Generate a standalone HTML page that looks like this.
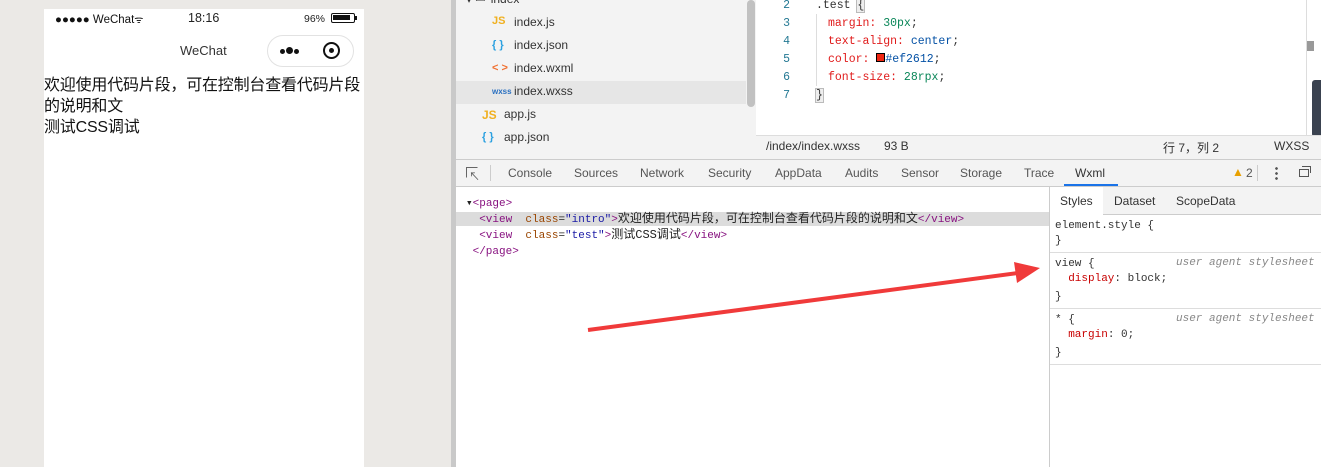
<!DOCTYPE html>
<html><head><meta charset="utf-8"><style>
*{margin:0;padding:0;box-sizing:border-box}
body{width:1321px;height:467px;overflow:hidden;position:relative;background:#ebe9e6;font-family:"Liberation Sans","Noto Sans CJK SC",sans-serif;font-size:12px;color:#333}
.a{position:absolute}
.mono{font-family:"Liberation Mono","Noto Sans CJK SC",monospace}
.tree div{position:absolute;height:23px;line-height:23px;font-size:12px;color:#333}
.ic{position:absolute;font-size:11px;font-weight:bold}
.code div{position:absolute;height:18px;line-height:18px;font-size:11.5px}
.ln{left:0;width:34px;text-align:right;color:#237893}
.tab{position:absolute;top:160px;height:27px;line-height:27px;font-size:12px;color:#555}
.k{color:#e01b1b}
.tg{color:#881280}.at{color:#994500}.av{color:#1a1aa6}
</style></head><body>
<!-- phone -->
<div class="a" style="left:44px;top:9px;width:320px;height:458px;background:#fff"></div>
<div class="a" style="left:55px;top:12px;font-size:11.5px;color:#111">●●●●● WeChat<span style="font-size:10px">ᯤ</span></div>
<div class="a" style="left:188px;top:11px;font-size:12.5px;color:#222">18:16</div>
<div class="a" style="left:304px;top:13px;font-size:10.5px;color:#222">96%</div>
<div class="a" style="left:331px;top:13px;width:24px;height:10px;border:1.5px solid #111;border-radius:2px;padding:1px"><div style="width:17px;height:5px;background:#111"></div></div>
<div class="a" style="left:355px;top:16px;width:2px;height:4px;background:#111"></div>
<div class="a" style="left:180px;top:43px;font-size:13px;color:#333">WeChat</div>
<div class="a" style="left:267px;top:35px;width:87px;height:32px;border:1px solid #e2e2e2;border-radius:16px;background:#fff"></div>
<div class="a" style="left:280px;top:49px;width:5px;height:5px;border-radius:50%;background:#111"></div>
<div class="a" style="left:286px;top:47px;width:7px;height:7px;border-radius:50%;background:#111"></div>
<div class="a" style="left:294px;top:49px;width:5px;height:5px;border-radius:50%;background:#111"></div>
<div class="a" style="left:323px;top:42px;width:17px;height:17px;border-radius:50%;border:2px solid #111"></div>
<div class="a" style="left:329px;top:48px;width:5px;height:5px;border-radius:50%;background:#111"></div>
<div class="a" style="left:44px;top:75px;width:322px;font-size:16px;line-height:21px;color:#111;letter-spacing:-0.2px">欢迎使用代码片段，可在控制台查看代码片段<br>的说明和文<br>测试CSS调试</div>
<!-- divider -->
<div class="a" style="left:451px;top:0;width:5px;height:467px;background:#c9c9c9"></div>
<!-- tree -->
<div class="a" style="left:456px;top:0;width:290px;height:160px;background:#f3f3f3"></div>
<div class="a" style="left:456px;top:81px;width:290px;height:23px;background:#e6e6e6"></div>
<div class="a" style="left:746px;top:0;width:10px;height:160px;background:#f3f3f3"></div>
<div class="a" style="left:747px;top:0;width:8px;height:107px;background:#c1c1c1;border-radius:4px"></div>
<div class="tree">
<div style="left:466px;top:-12px">▾ ▱ index</div>
<span class="ic" style="left:492px;top:15px;color:#f0b020">JS</span><div style="left:514px;top:11px">index.js</div>
<span class="ic" style="left:492px;top:39px;color:#2aa0e0">{ }</span><div style="left:514px;top:34px">index.json</div>
<span class="ic" style="left:492px;top:62px;color:#f07030">&lt; &gt;</span><div style="left:514px;top:57px">index.wxml</div>
<span class="ic" style="left:492px;top:87px;color:#2a70c0;font-size:8px">wxss</span><div style="left:514px;top:80px">index.wxss</div>
<span class="ic" style="left:482px;top:108px;color:#f0b020;font-size:12px">JS</span><div style="left:504px;top:103px">app.js</div>
<span class="ic" style="left:482px;top:131px;color:#2aa0e0">{ }</span><div style="left:504px;top:126px">app.json</div>
</div>
<!-- editor -->
<div class="a" style="left:756px;top:0;width:565px;height:135px;background:#fff"></div>
<div class="code mono">
<div class="ln" style="left:756px;top:-3px">2</div><div style="left:816px;top:-3px;color:#333">.test <span style="background:#eee;outline:1px solid #bbb">{</span></div>
<div class="ln" style="left:756px;top:15px">3</div><div style="left:828px;top:15px"><span class="k">margin:</span> <span style="color:#098658">30px</span>;</div>
<div class="ln" style="left:756px;top:33px">4</div><div style="left:828px;top:33px"><span class="k">text-align:</span> <span style="color:#0451a5">center</span>;</div>
<div class="ln" style="left:756px;top:51px">5</div><div style="left:828px;top:51px"><span class="k">color:</span> <span style="display:inline-block;width:9px;height:9px;background:#ef2612;border:1px solid #000"></span><span style="color:#0451a5">#ef2612</span>;</div>
<div class="ln" style="left:756px;top:69px">6</div><div style="left:828px;top:69px"><span class="k">font-size:</span> <span style="color:#098658">28rpx</span>;</div>
<div class="ln" style="left:756px;top:87px">7</div><div style="left:816px;top:87px;color:#333"><span style="background:#eee;outline:1px solid #bbb">}</span></div>
</div>
<div class="a" style="left:816px;top:14px;width:1px;height:72px;background:#ddd"></div>
<div class="a" style="left:1306px;top:0;width:1px;height:135px;background:#ddd"></div>
<div class="a" style="left:1307px;top:41px;width:7px;height:10px;background:#999"></div>
<div class="a" style="left:1312px;top:80px;width:9px;height:57px;background:#3a4250;border-radius:3px 0 0 3px"></div>
<!-- status -->
<div class="a" style="left:756px;top:135px;width:565px;height:25px;background:#f3f3f3;border-top:1px solid #ddd"></div>
<div class="a" style="left:766px;top:139px;font-size:12px">/index/index.wxss</div>
<div class="a" style="left:884px;top:139px;font-size:12px">93 B</div>
<div class="a" style="left:1163px;top:139px;font-size:12px">行 7，列 2</div>
<div class="a" style="left:1274px;top:139px;font-size:12px">WXSS</div>
<!-- toolbar -->
<div class="a" style="left:456px;top:159px;width:865px;height:28px;background:#f3f3f3;border-top:1px solid #ccc;border-bottom:1px solid #ccc"></div>
<div class="a" style="left:466px;top:167px;width:12px;height:11px;border:1.5px solid #666;border-right-color:transparent;border-bottom-color:transparent"></div>
<div class="a" style="left:469px;top:168px;font-size:11px;color:#555">↖</div>
<div class="a" style="left:490px;top:165px;width:1px;height:16px;background:#ccc"></div>
<div class="tab" style="left:508px">Console</div>
<div class="tab" style="left:574px">Sources</div>
<div class="tab" style="left:640px">Network</div>
<div class="tab" style="left:708px">Security</div>
<div class="tab" style="left:775px">AppData</div>
<div class="tab" style="left:845px">Audits</div>
<div class="tab" style="left:901px">Sensor</div>
<div class="tab" style="left:960px">Storage</div>
<div class="tab" style="left:1024px">Trace</div>
<div class="tab" style="left:1075px;color:#333">Wxml</div>
<div class="a" style="left:1064px;top:184px;width:54px;height:2px;background:#1a73e8"></div>
<div class="a" style="left:1232px;top:165px;color:#e8a000;font-size:12px">▲</div><div class="a" style="left:1246px;top:166px;font-size:12px;color:#555">2</div>
<div class="a" style="left:1257px;top:165px;width:1px;height:16px;background:#ccc"></div>
<div class="a" style="left:1275px;top:166px;width:3px;height:14px;background:radial-gradient(circle,#555 1.2px,transparent 1.5px) 0 0/3px 5px"></div>
<div class="a" style="left:1299px;top:169px;width:10px;height:8px;border:1.5px solid #555"></div>
<div class="a" style="left:1302px;top:166px;width:9px;height:7px;border-top:1.5px solid #555;border-right:1.5px solid #555"></div>
<!-- bottom -->
<div class="a" style="left:456px;top:187px;width:865px;height:280px;background:#fff"></div>
<div class="a" style="left:456px;top:212px;width:593px;height:14px;background:#dcdcdc"></div>
<div class="a mono" style="left:466px;top:197px;font-size:11px;line-height:15.2px;color:#222;white-space:pre">▾<span class="tg">&lt;page&gt;</span>
  <span class="tg">&lt;view</span>  <span class="at">class</span>=<span class="av">"intro"</span><span class="tg">&gt;</span><span style="font-size:12px">欢迎使用代码片段，可在控制台查看代码片段的说明和文</span><span class="tg">&lt;/view&gt;</span>
  <span class="tg">&lt;view</span>  <span class="at">class</span>=<span class="av">"test"</span><span class="tg">&gt;</span><span style="font-size:12px">测试CSS调试</span><span class="tg">&lt;/view&gt;</span>
 <span class="tg">&lt;/page&gt;</span></div>
<div class="a" style="left:1049px;top:187px;width:1px;height:280px;background:#ccc"></div>
<div class="a" style="left:1050px;top:187px;width:271px;height:28px;background:#f3f3f3;border-bottom:1px solid #ccc"></div>
<div class="a" style="left:1050px;top:187px;width:53px;height:28px;background:#fff"></div>
<div class="a" style="left:1060px;top:194px;font-size:12px;color:#333">Styles</div>
<div class="a" style="left:1114px;top:194px;font-size:12px;color:#333">Dataset</div>
<div class="a" style="left:1176px;top:194px;font-size:12px;color:#333">ScopeData</div>
<div class="a mono" style="left:1055px;top:219px;font-size:11px;line-height:15px;color:#333">element.style {<br>}</div>
<div class="a" style="left:1050px;top:252px;width:271px;height:1px;background:#ddd"></div>
<div class="a mono" style="left:1055px;top:257px;font-size:11px;line-height:15px;color:#333">view {<br>&nbsp;&nbsp;<span style="color:#c80000">display</span>: block;<br><span style="line-height:20px">}</span></div>
<div class="a mono" style="left:1176px;top:257px;font-size:11px;font-style:italic;color:#888">user agent stylesheet</div>
<div class="a" style="left:1050px;top:308px;width:271px;height:1px;background:#ddd"></div>
<div class="a mono" style="left:1055px;top:313px;font-size:11px;line-height:15px;color:#333">* {<br>&nbsp;&nbsp;<span style="color:#c80000">margin</span>: 0;<br><span style="line-height:20px">}</span></div>
<div class="a mono" style="left:1176px;top:313px;font-size:11px;font-style:italic;color:#888">user agent stylesheet</div>
<div class="a" style="left:1050px;top:364px;width:271px;height:1px;background:#ddd"></div>
<svg class="a" style="left:0;top:0" width="1321" height="467"><path d="M588 330 L1018 273" stroke="#f03a3a" stroke-width="4"/><path d="M1040 268 L1014 262 L1017 283 Z" fill="#f03a3a"/></svg>
</body></html>
